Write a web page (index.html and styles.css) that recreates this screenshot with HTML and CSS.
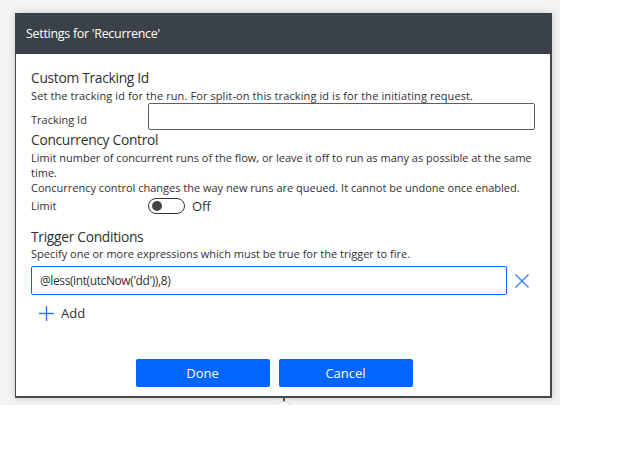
FILE: index.html
```html
<!DOCTYPE html>
<html lang="en">
<head>
<meta charset="utf-8">
<title>Settings for 'Recurrence'</title>
<link rel="stylesheet" href="styles.css">
</head>
<body>
<div class="canvas">
  <div class="panel">
    <div class="header">Settings for 'Recurrence'</div>
    <div class="body">
      <section class="sec sec-tracking">
        <h2 class="sec-title">Custom Tracking Id</h2>
        <p class="desc">Set the tracking id for the run. For split-on this tracking id is for the initiating request.</p>
        <div class="field-row">
          <span class="field-label">Tracking Id</span>
          <div class="text-input"></div>
        </div>
      </section>
      <section class="sec sec-concurrency">
        <h2 class="sec-title">Concurrency Control</h2>
        <p class="desc">Limit number of concurrent runs of the flow, or leave it off to run as many as possible at the same time.</p>
        <p class="desc">Concurrency control changes the way new runs are queued. It cannot be undone once enabled.</p>
        <div class="field-row toggle-row">
          <span class="field-label">Limit</span>
          <span class="toggle"><span class="knob"></span></span>
          <span class="toggle-text">Off</span>
        </div>
      </section>
      <section class="sec sec-trigger">
        <h2 class="sec-title">Trigger Conditions</h2>
        <p class="desc">Specify one or more expressions which must be true for the trigger to fire.</p>
        <div class="cond-row">
          <div class="text-input focused">@less(int(utcNow('dd')),8)</div>
          <svg class="remove" width="14" height="14" viewBox="0 0 14 14"><path d="M0.5 0.5 L13.5 13.5 M13.5 0.5 L0.5 13.5" stroke="#2f7bff" stroke-width="1.3" fill="none"/></svg>
        </div>
        <div class="add-row">
          <svg class="plus" width="15" height="15" viewBox="0 0 15 15"><path d="M7.5 0 V15 M0 7.5 H15" stroke="#2f7bff" stroke-width="1.4" fill="none"/></svg>
          <span class="add-text">Add</span>
        </div>
      </section>
    </div>
    <div class="footer">
      <button class="btn">Done</button>
      <button class="btn">Cancel</button>
    </div>
  </div>
  <div class="connector"><span class="connector-line"></span><span class="connector-dot"></span></div>
</div>
</body>
</html>
```
FILE: styles.css
```css
* { box-sizing: border-box; }
html, body { margin: 0; padding: 0; background: #ffffff; }
body { font-family: "Open Sans", "Noto Sans", sans-serif; color: #323130; }

.canvas {
  position: relative;
  width: 560px;
  height: 405px;
  background: #f4f4f4;
  padding: 13px 0 0 15px;
  overflow: hidden;
}

.panel {
  width: 537px;
  height: 385px;
  background: #ffffff;
  border: 1px solid #4a4a4a;
  border-width: 0 2px 2px 1px;
  box-shadow: 0 0 8px rgba(0, 0, 0, 0.18);
  display: flex;
  flex-direction: column;
}

.header {
  height: 41px;
  margin: 0 -2px 0 -1px;
  background: #3b4148;
  color: #ffffff;
  font-size: 12.5px;
  letter-spacing: -0.3px;
  line-height: 42px;
  padding-left: 11px;
}

.body {
  padding: 15px 15px 0 15px;
  flex: 1;
}

.sec-title {
  margin: 0;
  font-size: 13.8px;
  letter-spacing: -0.3px;
  font-weight: 400;
  line-height: 18px;
  color: #323130;
}

.desc {
  margin: 0;
  font-size: 11px;
  line-height: 15px;
  color: #323130;
}

.sec-tracking .desc { margin-top: 1px; letter-spacing: 0.1px; }

.field-row {
  display: flex;
  align-items: center;
}

.field-label {
  width: 117px;
  font-size: 11px;
  line-height: 15px;
  padding-top: 5px;
}

.text-input {
  height: 27px;
  flex: 1;
  border: 1px solid #605e5c;
  border-radius: 2px;
  font-size: 12px;
  letter-spacing: -0.4px;
  line-height: 25px;
  padding-left: 8px;
  color: #323130;
}

.sec-concurrency { margin-top: 1px; }
.sec-concurrency .sec-title { margin-bottom: 1px; }

.toggle-row { align-items: flex-start; height: 20px; }
.toggle-row .field-label { padding-top: 3px; }

.toggle {
  margin-top: 3px;
  width: 37px;
  height: 16px;
  border: 1px solid #333333;
  border-radius: 8px;
  display: flex;
  align-items: center;
  padding-left: 3px;
}
.knob {
  width: 10px;
  height: 10px;
  border-radius: 50%;
  background: #444444;
}
.toggle-text {
  margin-left: 7px;
  font-size: 13px;
  line-height: 20px;
  padding-top: 1px;
}

.sec-trigger { margin-top: 13px; }

.cond-row {
  margin-top: 5px;
  display: flex;
  align-items: center;
  width: 498px;
}
.cond-row .text-input { height: 29px; line-height: 28px; }
.text-input.focused { border-color: #0066ff; }
.remove { margin-left: 8px; flex: none; }

.add-row {
  display: flex;
  align-items: center;
  margin-top: 11px;
  padding-left: 8px;
}
.plus { flex: none; }
.add-text { margin-left: 7px; font-size: 13px; line-height: 15px; }

.footer {
  display: flex;
  justify-content: center;
  gap: 9px;
  padding-bottom: 9px;
  padding-right: 18px;
}

.btn {
  width: 134px;
  height: 28px;
  border: none;
  border-radius: 2px;
  background: #0066ff;
  color: #ffffff;
  font-family: inherit;
  font-size: 13px;
  padding: 0;
}

.connector {
  position: absolute;
  left: 275px;
  top: 398px;
  width: 17px;
  display: flex;
  flex-direction: column;
  align-items: center;
}
.connector-line { width: 2px; height: 4px; background: #555555; }
.connector-dot {
  width: 17px;
  height: 17px;
  border-radius: 50%;
  background: #ffffff;
  border: 1px solid #d6d6d6;
  margin-top: -1px;
}
```
